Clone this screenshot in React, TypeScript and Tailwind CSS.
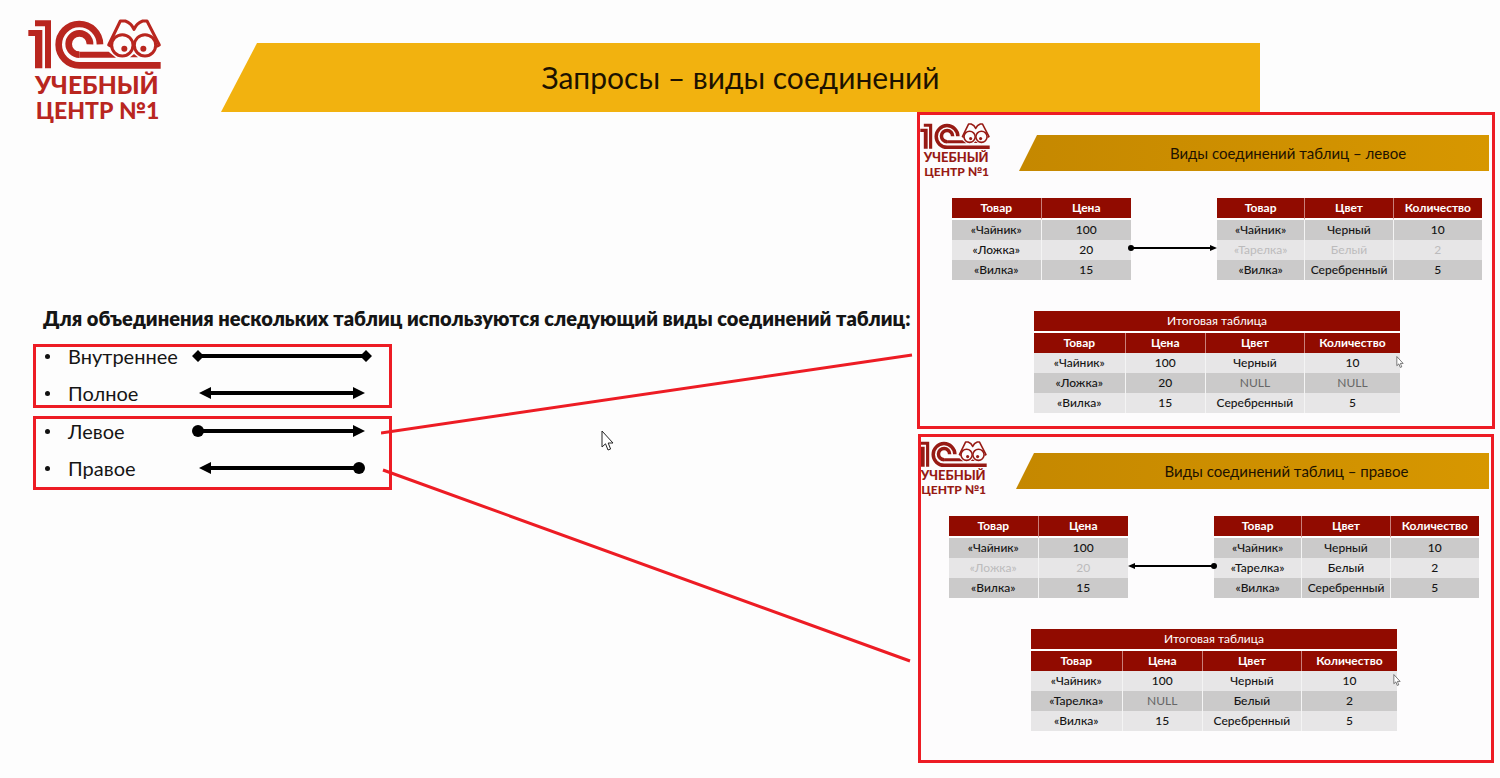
import type { ReactNode } from "react";

type LinkKind = "inner" | "full" | "left" | "right";
type Cell = string;

interface TableRow {
  cells: Cell[];
  muted?: boolean;
}

const lineShape: Record<LinkKind, string> = {
  inner: "M8 7H172",
  full: "M16 7H164",
  left: "M8 7H164",
  right: "M16 7H166",
};

function Logo({ className }: { className: string }) {
  return (
    <svg viewBox="54 42 399 309" className={`overflow-visible ${className}`} role="img" aria-label="1С Учебный центр №1">
      <g fill="currentColor">
        <path d="M75 46H123V190H105V64H75Z" />
        <path d="M55 75H97V190H75V93H55Z" />
        <circle cx="343" cy="131" r="9" />
        <circle cx="400" cy="131" r="9" />
        <path d="M360 157L372 147L384 157Z" />
        <path d="M208 140H296L318 158H208Z" />
      </g>
      <g fill="none" stroke="currentColor">
        <path strokeWidth="20" d="M270 118A62 62 0 1 0 208 181H452" />
        <path strokeWidth="20" d="M240 118A32 32 0 1 0 208 149" />
        <g strokeWidth="9" strokeLinejoin="round">
          <circle cx="337" cy="121" r="32" />
          <circle cx="405" cy="121" r="32" />
          <path d="M304 124L296 120L331 48L346 48Q364 54 372 73Q380 54 398 48L411 48L448 120L440 124" />
        </g>
      </g>
      <g fill="currentColor" fontFamily="Lato, sans-serif" fontWeight="900">
        <text x="75" y="268" fontSize="74">
          УЧЕБНЫЙ
        </text>
        <text x="77" y="343" fontSize="69">
          ЦЕНТР №1
        </text>
      </g>
    </svg>
  );
}

function JoinLine({ kind }: { kind: LinkKind }) {
  return (
    <svg viewBox="0 0 180 14" className="mb-0.5 h-[14px] w-[180px] shrink-0" aria-hidden="true">
      <path d={lineShape[kind]} stroke="#000" strokeWidth="4" />
      {kind === "inner" && <path d="M0 7L6 1L12 7L6 13ZM168 7L174 1L180 7L174 13Z" />}
      {(kind === "full" || kind === "right") && <path d="M7 7L19 1V13Z" />}
      {(kind === "full" || kind === "left") && <path d="M173 7L161 1V13Z" />}
      {kind === "left" && <circle cx="6" cy="7" r="6" />}
      {kind === "right" && <circle cx="167" cy="7" r="6" />}
    </svg>
  );
}

function JoinItem({ label, kind }: { label: string; kind: LinkKind }) {
  return (
    <li className="flex h-[19px] items-center">
      <span className="ml-[9px] size-[5px] rounded-full bg-[#111]" />
      <span className="ml-[18px] w-[124px] text-[20px] leading-[19px]">{label}</span>
      <JoinLine kind={kind} />
    </li>
  );
}

function Pointer({ className }: { className: string }) {
  return (
    <svg viewBox="0 0 13 21" className={className} aria-hidden="true">
      <path d="M1 1V17L4.500 13.800L7 20L9.600 19L7.200 13H12Z" fill="#fff" stroke="#222" strokeWidth="1" />
    </svg>
  );
}

function DataTable({
  title,
  widths,
  head,
  rows,
  shadedFirst,
}: {
  title?: string;
  widths: string[];
  head: string[];
  rows: TableRow[];
  shadedFirst: boolean;
}) {
  return (
    <table className="w-full table-fixed border-separate border-spacing-0 text-center text-[12px] leading-4 text-[#151515]">
      <colgroup>
        {widths.map((w, i) => (
          <col key={i} className={w} />
        ))}
      </colgroup>
      <thead className="text-white">
        {title && (
          <tr>
            <th colSpan={head.length} className="h-[22px] border-b-2 border-white bg-[#910b00] bg-clip-padding p-0 font-normal">
              {title}
            </th>
          </tr>
        )}
        <tr>
          {head.map((h) => (
            <th
              key={h}
              scope="col"
              className={`border-r border-[#c9807a] bg-[#910b00] bg-clip-padding p-0 font-bold last:border-r-0 ${
                title ? "h-5" : "h-[22px] border-b-2 border-b-white"
              }`}
            >
              {h}
            </th>
          ))}
        </tr>
      </thead>
      <tbody>
        {rows.map((row, r) => {
          const shaded = (r % 2 === 0) === shadedFirst;
          return (
            <tr key={r} className={shaded ? "bg-[#cbcaca]" : "bg-[#e7e6e7]"}>
              {row.cells.map((cell, c) => (
                <td
                  key={c}
                  className={`h-5 border-r border-[#f4f4f4] p-0 last:border-r-0 ${
                    row.muted ? "text-[#bcbbbc]" : cell === "NULL" ? "text-[#666]" : "font-medium"
                  }`}
                >
                  {cell}
                </td>
              ))}
            </tr>
          );
        })}
      </tbody>
    </table>
  );
}

function TableLink({ reversed }: { reversed: boolean }) {
  return (
    <svg viewBox="0 0 86 10" className="relative z-10 mt-[45px] w-full overflow-visible" aria-hidden="true">
      <g transform={reversed ? "rotate(180 43 5)" : undefined}>
        <path d="M0 5H80" stroke="#000" strokeWidth="2" />
        <circle cx="0" cy="5" r="3" />
        <path d="M86 5L79 2V8Z" />
      </g>
    </svg>
  );
}

function Slide({
  title,
  reversed,
  logoClass,
  frameClass,
  bodyClass,
  price,
  colour,
  result,
}: {
  title: string;
  reversed: boolean;
  logoClass: string;
  frameClass: string;
  bodyClass: string;
  price: TableRow[];
  colour: TableRow[];
  result: TableRow[];
}) {
  return (
    <article className={`overflow-hidden border-[3px] border-[#ed1c24] bg-[#fdfcfd] ${frameClass}`}>
      <header className="flex items-start">
        <Logo className={`h-[54px] w-[70px] shrink-0 text-[#971a14] ${logoClass}`} />
        <h2 className="mt-3 ml-[29px] flex h-9 flex-1 items-center justify-center bg-linear-to-r from-[#c58800] to-[#d79700] pl-[68px] text-[15px] text-[#1d1200] [clip-path:polygon(18px_0,100%_0,100%_100%,0_100%)]">
          {title}
        </h2>
      </header>
      <div className={bodyClass}>
        <div className="grid grid-cols-[179fr_86fr_265fr] items-start">
          <DataTable widths={["w-1/2", "w-1/2"]} head={["Товар", "Цена"]} rows={price} shadedFirst />
          <TableLink reversed={reversed} />
          <DataTable widths={["w-1/3", "w-1/3", "w-1/3"]} head={["Товар", "Цвет", "Количество"]} rows={colour} shadedFirst />
        </div>
        <div className="relative mt-[31px] mr-[82px] ml-[82px]">
          <DataTable
            title="Итоговая таблица"
            widths={["w-[25%]", "w-[22%]", "w-[27%]", "w-[26%]"]}
            head={["Товар", "Цена", "Цвет", "Количество"]}
            rows={result}
            shadedFirst={false}
          />
          <Pointer className="absolute top-[45px] -right-1 h-[12px] w-[8px]" />
        </div>
      </div>
    </article>
  );
}

function JoinGroup({ className, children }: { className: string; children: ReactNode }) {
  return <ul className={`flex w-[359px] flex-col gap-[18px] border-[3px] border-[#ed1c24] ${className}`}>{children}</ul>;
}

const kettle = "«Чайник»";
const spoon = "«Ложка»";
const fork = "«Вилка»";
const plate = "«Тарелка»";
const black = "Черный";
const white = "Белый";
const silver = "Серебренный";

export default function App() {
  return (
    <div className="min-h-screen bg-[#fdfdfd] font-[Lato,'Noto_Sans',sans-serif] text-[#151515]">
      <header className="flex h-28 items-start pl-7">
        <Logo className="mt-[19px] h-[103px] w-[133px] shrink-0 text-[#b9261f]" />
        <h1 className="mt-[43px] mr-60 ml-[60px] flex h-[69px] flex-1 items-center justify-center bg-[#f2b20f] text-[30px] text-[#1d1200] [clip-path:polygon(36px_0,100%_0,100%_100%,0_100%)]">
          Запросы – виды соединений
        </h1>
      </header>
      <main className="flex items-start">
        <section className="relative min-w-0 flex-1 pt-[192px] pl-[33px]">
          <p className="mb-3 pl-[10px] text-[20px] leading-7 font-extrabold whitespace-nowrap">
            Для объединения нескольких таблиц используются следующий виды соединений таблиц:
          </p>
          <JoinGroup className="h-16">
            <JoinItem label="Внутреннее" kind="inner" />
            <JoinItem label="Полное" kind="full" />
          </JoinGroup>
          <JoinGroup className="mt-2 h-[74px] pt-[3px]">
            <JoinItem label="Левое" kind="left" />
            <JoinItem label="Правое" kind="right" />
          </JoinGroup>
          <svg
            viewBox="0 0 536 310"
            preserveAspectRatio="none"
            className="absolute top-[241px] left-[381px] h-[310px] w-[calc(100%-381px)]"
            aria-hidden="true"
          >
            <path d="M0 80L531 2M2 117L529 308" fill="none" stroke="#ed1c24" strokeWidth="3" />
          </svg>
          <Pointer className="absolute top-[318px] left-[601px] h-[21px] w-[13px]" />
        </section>
        <div className="mr-[5px] flex w-[578px] shrink-0 flex-col gap-[5px]">
          <Slide
            title="Виды соединений таблиц – левое"
            reversed={false}
            logoClass=""
            frameClass="h-[317px] pt-2 pr-[3px]"
            bodyClass="mt-[21px] ml-8 mr-[7px]"
            price={[{ cells: [kettle, "100"] }, { cells: [spoon, "20"] }, { cells: [fork, "15"] }]}
            colour={[
              { cells: [kettle, black, "10"] },
              { cells: [plate, white, "2"], muted: true },
              { cells: [fork, silver, "5"] },
            ]}
            result={[
              { cells: [kettle, "100", black, "10"] },
              { cells: [spoon, "20", "NULL", "NULL"] },
              { cells: [fork, "15", silver, "5"] },
            ]}
          />
          <Slide
            title="Виды соединений таблиц – правое"
            reversed
            logoClass="-ml-1"
            frameClass="mx-px h-[329px] pt-1 pr-[2px]"
            bodyClass="mt-[21px] ml-7 mr-[10px]"
            price={[{ cells: [kettle, "100"] }, { cells: [spoon, "20"], muted: true }, { cells: [fork, "15"] }]}
            colour={[
              { cells: [kettle, black, "10"] },
              { cells: [plate, white, "2"] },
              { cells: [fork, silver, "5"] },
            ]}
            result={[
              { cells: [kettle, "100", black, "10"] },
              { cells: [plate, "NULL", white, "2"] },
              { cells: [fork, "15", silver, "5"] },
            ]}
          />
        </div>
      </main>
    </div>
  );
}
